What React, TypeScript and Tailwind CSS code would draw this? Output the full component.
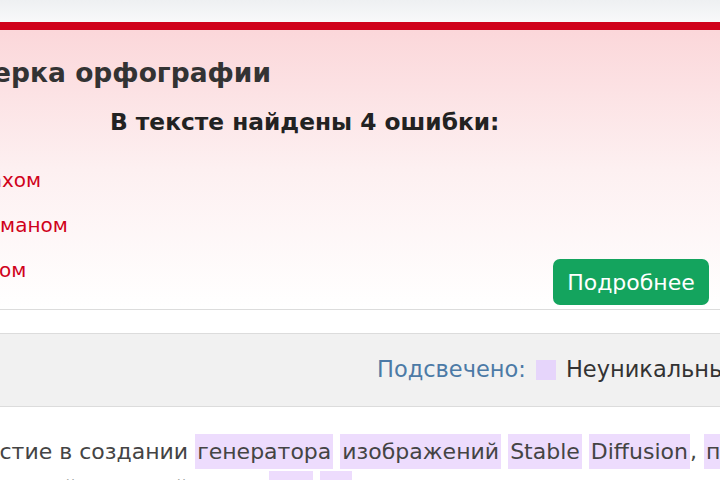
const font = { fontFamily: '"DejaVu Sans", Tahoma, sans-serif' };

function Mark({ children }: { children: React.ReactNode }) {
  return <span className="bg-[#eddcfd] px-[2px] py-[5px]">{children}</span>;
}

export default function App() {
  return (
    <div
      className="relative h-[480px] w-[720px] overflow-hidden bg-white text-[#333]"
      style={font}
    >
      <div className="h-[22px] bg-gradient-to-b from-[#eef0f2] to-[#f8f9fa]" />
      <div className="h-[8px] bg-[#d0021b]" />

      <section className="flex h-[280px] flex-col border-b border-[#dcdcdc] bg-gradient-to-b from-[#fbd7da] via-[#fdf0f1] to-white">
        <h1 className="-ml-[83px] mt-[26px] whitespace-nowrap text-[26.5px] font-bold leading-[34px] text-[#333]">
          Проверка орфографии
        </h1>
        <p className="ml-[110px] mt-[18px] whitespace-nowrap text-[23.3px] font-bold leading-[28px] text-[#222]">
          В тексте найдены 4 ошибки:
        </p>
        <div className="mt-[30px] flex flex-1 justify-between pr-[11px]">
          <ul className="-ml-[62px] flex flex-col gap-[17px] self-start whitespace-nowrap text-[20px] leading-[28px] text-[#d0021b]">
            <li>Ромбахом</li>
            <li>Блаттманом</li>
            <li>Эссером</li>
          </ul>
          <button className="mb-[4px] h-[46px] w-[156px] self-end rounded-[7px] bg-[#14a45e] text-[22px] text-white">
            Подробнее
          </button>
        </div>
      </section>

      <div className="h-[24px] border-b border-[#dcdcdc]" />

      <div className="flex h-[73px] items-center whitespace-nowrap border-b border-[#dcdcdc] bg-[#f1f1f1] pl-[377px] text-[22.5px]">
        <span className="text-[#4c7aa6]">Подсвечено:</span>
        <span className="ml-[10px] block h-[20px] w-[20px] shrink-0 bg-[#e6d5fb]" />
        <span className="ml-[10px] text-[#333]">Неуникальные фрагменты</span>
      </div>

      <div className="mt-[26px] whitespace-nowrap text-[22px] leading-[37px] text-[#444]">
        <p className="-ml-[40px]">
          участие в создании <Mark>генератора</Mark> <Mark>изображений</Mark>{" "}
          <Mark>Stable</Mark> <Mark>Diffusion</Mark>, <Mark>покинул</Mark>
        </p>
        <p className="-ml-[15px]">
          бывший ведущий автор <Mark>так</Mark> <Mark>он</Mark> теперь
        </p>
      </div>
    </div>
  );
}
